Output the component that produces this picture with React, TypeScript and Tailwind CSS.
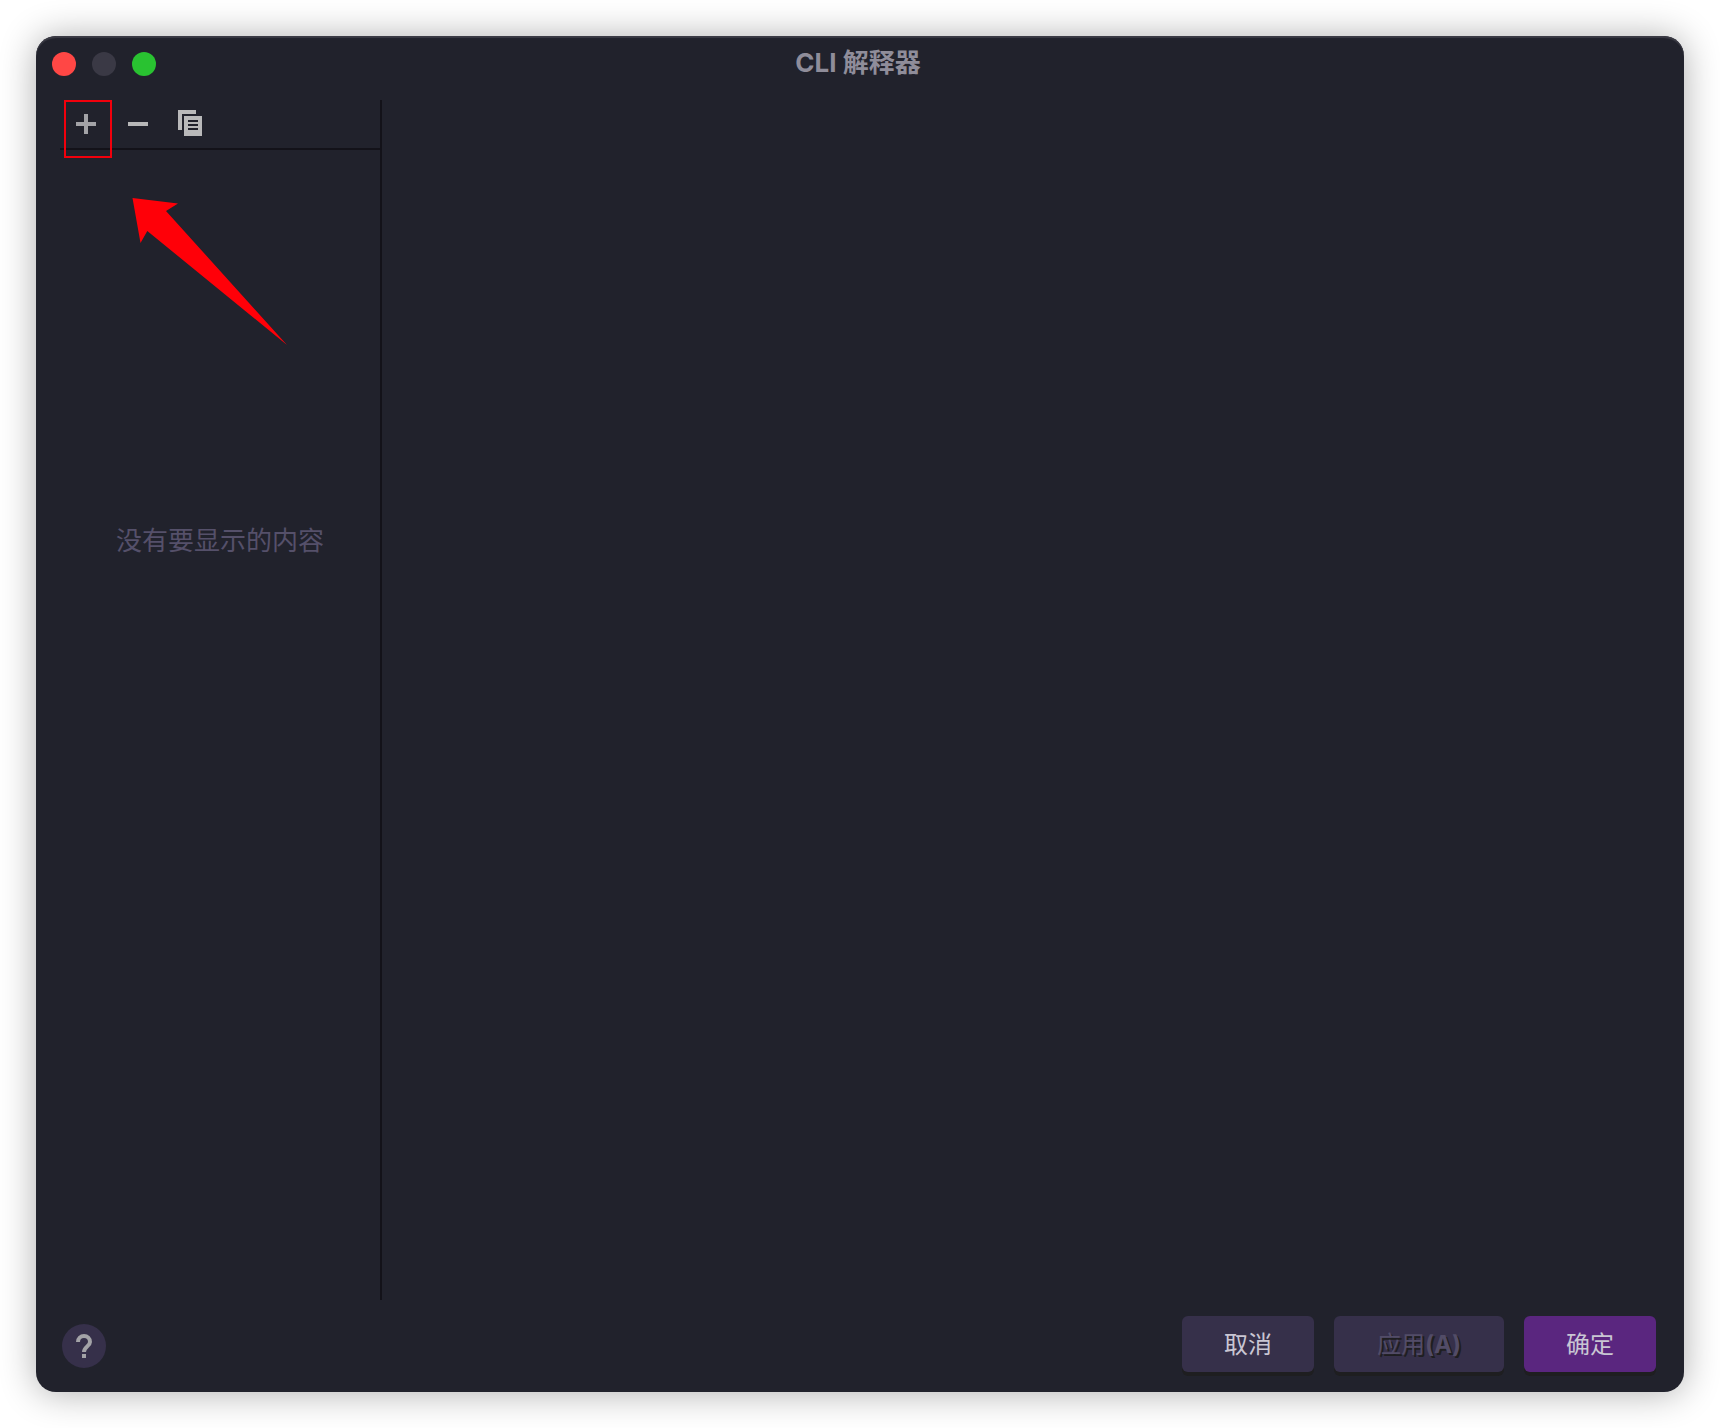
function TrafficLights() {
  return (
    <div className="flex gap-4">
      <button type="button" aria-label="关闭" className="size-6 rounded-full bg-[#ff4745]" />
      <button type="button" aria-label="最小化" className="size-6 rounded-full bg-[#3a3945]" />
      <button type="button" aria-label="缩放" className="size-6 rounded-full bg-[#29c231]" />
    </div>
  );
}

function TitleBar() {
  return (
    <header className="grid h-16 grid-cols-[1fr_auto_1fr] items-start px-4 pt-4">
      <TrafficLights />
      <h1 className="-mt-1 pr-1 text-[26px] leading-[30px] font-bold text-[#8f8d9a]">CLI 解释器</h1>
    </header>
  );
}

function Toolbar() {
  return (
    <div className="flex h-[50px] items-start gap-1 border-b-2 border-[#131219]">
      <div className="relative">
        <button type="button" aria-label="添加" className="flex h-12 w-12 items-center justify-center pl-1">
          <svg width="20" height="20" viewBox="0 0 20 20" className="shrink-0" fill="#a3a3a7" aria-hidden="true">
            <path d="M8 0h4v8h8v4h-8v8H8v-8H0V8h8z" />
          </svg>
        </button>
        <div className="pointer-events-none absolute top-0 left-1 h-[58px] w-12 border-2 border-[#f2000c]" />
        <svg
          className="pointer-events-none absolute top-[98px] left-[72px]"
          width="156"
          height="148"
          viewBox="0 0 156 148"
          fill="#ff0008"
          aria-hidden="true"
        >
          <path d="M.5 0 46 5.5 34 13 155 147 15.3 33 8.5 45z" />
        </svg>
      </div>
      <button type="button" aria-label="移除" className="flex h-12 w-12 items-center justify-center pl-1">
        <svg width="20" height="20" viewBox="0 0 20 20" className="shrink-0" fill="#b7b7b8" aria-hidden="true">
          <path d="M0 8h20v4H0z" />
        </svg>
      </button>
      <button type="button" aria-label="复制" className="flex h-12 w-12 items-center justify-center pb-0.5 pl-1">
        <svg width="24" height="26" viewBox="0 0 24 26" className="shrink-0" fill="#b9b9ba" aria-hidden="true">
          <path d="M0 0h18v4H4v16H0z" />
          <path fillRule="evenodd" d="M6 6h18v20H6zM10 10v2h10v-2zM10 14v2h10v-2zM10 18v2h10v-2z" />
        </svg>
      </button>
    </div>
  );
}

function HelpButton() {
  return (
    <button
      type="button"
      aria-label="帮助"
      className="flex size-11 items-center justify-center rounded-full bg-[#36304a]"
    >
      <svg width="16" height="24" viewBox="0 0 16 24" aria-hidden="true">
        <path
          d="M2 8a6 6 0 1 1 12 0c0 4-6 5-6 10"
          fill="none"
          stroke="#a3a3a7"
          strokeWidth="4"
        />
        <path d="M6 20h4v4H6z" fill="#a3a3a7" />
      </svg>
    </button>
  );
}

export default function App() {
  return (
    <div className="flex min-h-screen bg-white p-9 font-[Inter,'Noto_Sans_CJK_SC',sans-serif]">
      <div className="flex flex-1 flex-col rounded-[20px] bg-[#21222c] shadow-[0_1px_36px_rgba(0,0,0,0.32),inset_0_2px_1px_#3b3b45]">
        <TitleBar />
        <main className="flex flex-1">
          <aside className="ml-6 flex w-[322px] flex-col border-r-2 border-[#131219]">
            <Toolbar />
            <p className="pt-[373px] text-center text-[26px] leading-9 text-[#55506a]">没有要显示的内容</p>
          </aside>
          <section aria-label="解释器详情" className="flex-1" />
        </main>
        <footer className="flex h-[92px] items-start justify-between pt-4 pr-7 pl-[26px]">
          <div className="pt-2">
            <HelpButton />
          </div>
          <div className="flex gap-5 text-2xl text-[#c9c6d3]">
            <button type="button" className="h-14 w-[132px] rounded-md bg-[#36304a] pt-0.5 shadow-[0_4px_0_#1e1e20]">
              取消
            </button>
            <button
              type="button"
              disabled
              className="h-14 w-[170px] rounded-md bg-[#36304a] pt-0.5 text-[#524c67] shadow-[0_4px_0_#1e1e20] [text-shadow:2px_2px_0_#1e1e20]"
            >
              应用<span className="font-bold">(A)</span>
            </button>
            <button type="button" className="h-14 w-[132px] rounded-md bg-[#5a267f] pt-0.5 shadow-[0_4px_0_#1e1e20]">
              确定
            </button>
          </div>
        </footer>
      </div>
    </div>
  );
}
